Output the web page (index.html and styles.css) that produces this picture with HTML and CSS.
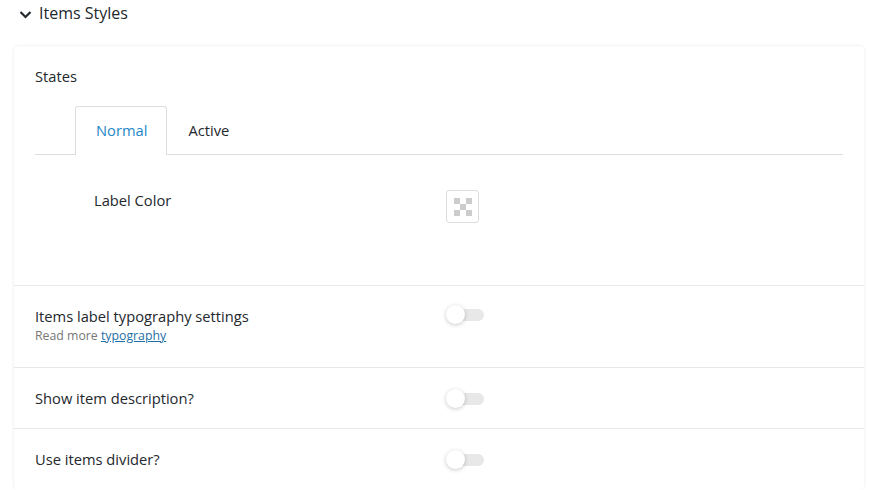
FILE: index.html
```html
<!DOCTYPE html>
<html lang="en">
<head>
    <meta charset="UTF-8">
    <meta name="viewport" content="width=device-width, initial-scale=1.0">
    <title>Items Styles</title>
    <link rel="stylesheet" href="styles.css">
</head>
<body>
    <div class="section-head">
        <svg class="chevron" width="13" height="9" viewBox="0 0 13 9">
            <path d="M1.5 2 L6.5 7 L11.5 2" fill="none" stroke="#23282d" stroke-width="2.2"/>
        </svg>
        <span>Items Styles</span>
    </div>

    <div class="card">
        <div class="states">
            <div class="states-title">States</div>
            <div class="tabs">
                <div class="tab active">Normal</div>
                <div class="tab">Active</div>
            </div>
            <div class="tab-panel">
                <div class="panel-label">Label Color</div>
                <div class="swatch">
                    <span class="check"></span>
                </div>
            </div>
        </div>

        <div class="row tall">
            <div class="row-label">
                <div>Items label typography settings</div>
                <div class="desc">Read more <a href="#">typography</a></div>
            </div>
            <div class="toggle"><span class="knob"></span></div>
        </div>

        <div class="row">
            <div class="row-label">Show item description?</div>
            <div class="toggle"><span class="knob"></span></div>
        </div>

        <div class="row">
            <div class="row-label">Use items divider?</div>
            <div class="toggle"><span class="knob"></span></div>
        </div>
    </div>
</body>
</html>
```

FILE: styles.css
```css
body {
    margin: 0;
    font-family: "Open Sans", "Noto Sans", sans-serif;
    font-size: 14.7px;
    color: #23282d;
    background-color: #fff;
}
.section-head {
    display: flex;
    align-items: center;
    gap: 7px;
    height: 28px;
    padding-left: 19px;
    font-size: 16px;
}
.section-head span {
    position: relative;
    top: -1px;
}
.card {
    margin: 18px 0 0 14px;
    width: 850px;
    background-color: #fff;
    border-radius: 4px;
    box-shadow: 0 0 3px rgba(0, 0, 0, 0.1);
}
.states {
    padding: 20px 21px 0;
    height: 219px;
    border-bottom: 1px solid #e8e8e8;
}
.states-title {
    line-height: 21px;
}
.tabs {
    display: flex;
    margin-top: 19px;
    padding-left: 40px;
    border-bottom: 1px solid #ddd;
}
.tab {
    height: 47px;
    line-height: 47px;
    padding: 0 20px;
    border: 1px solid transparent;
    border-bottom: none;
    margin-bottom: -1px;
}
.tab.active {
    color: #1e87c8;
    background-color: #fff;
    border-color: #ddd;
    border-radius: 3px 3px 0 0;
    height: 48px;
    padding: 0 19px 0 20px;
}
.tab-panel {
    display: grid;
    grid-template-columns: 352px auto;
    padding: 35px 0 0 59px;
}
.panel-label {
    line-height: 21px;
}
.swatch {
    width: 31px;
    height: 31px;
    border: 1px solid #ddd;
    border-radius: 3px;
    display: flex;
    align-items: center;
    justify-content: center;
}
.check {
    width: 18px;
    height: 18px;
    background-image:
        linear-gradient(#ccc, #ccc),
        linear-gradient(#ccc, #ccc),
        linear-gradient(#ccc, #ccc),
        linear-gradient(#ccc, #ccc),
        linear-gradient(#ccc, #ccc);
    background-size: 6px 6px;
    background-repeat: no-repeat;
    background-position: 0 0, 12px 0, 6px 6px, 0 12px, 12px 12px;
}
.row {
    display: grid;
    grid-template-columns: 411px auto;
    align-items: center;
    padding: 20px 21px 19px;
    min-height: 21px;
    border-bottom: 1px solid #e8e8e8;
}
.row:last-child {
    border-bottom: none;
}
.row.tall {
    align-items: start;
    padding: 20px 21px 22px;
}
.row.tall .toggle {
    margin-top: -1px;
}
.row-label {
    line-height: 21px;
}
.desc {
    font-size: 12.3px;
    line-height: 18px;
    color: #777;
}
.desc a {
    color: #1e6fa8;
}
.toggle {
    position: relative;
    width: 38px;
    height: 20px;
}
.toggle::before {
    content: "";
    position: absolute;
    left: 9px;
    right: 0;
    top: 4px;
    height: 12px;
    border-radius: 6px;
    background-color: #e8e8e8;
}
.knob {
    position: absolute;
    left: 0;
    top: 0;
    width: 19px;
    height: 19px;
    border-radius: 50%;
    background-color: #fff;
    box-shadow: 0 1px 4px rgba(0, 0, 0, 0.22);
}
```
